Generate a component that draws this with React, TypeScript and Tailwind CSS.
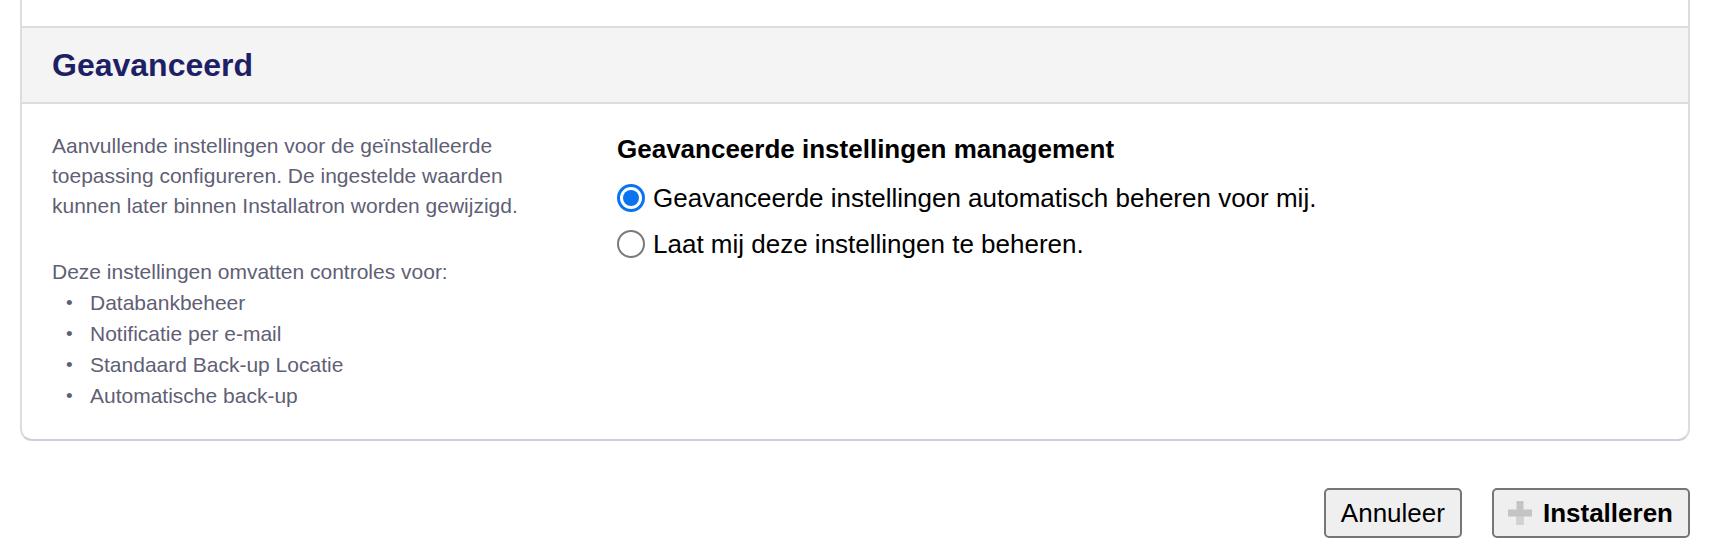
const features = [
  "Databankbeheer",
  "Notificatie per e-mail",
  "Standaard Back-up Locatie",
  "Automatische back-up",
];

function Radio({ checked }: { checked: boolean }) {
  if (checked) {
    return (
      <span className="flex h-[28px] w-[28px] shrink-0 items-center justify-center rounded-full border-[3px] border-[#0a74f0] bg-white">
        <span className="h-[16px] w-[16px] rounded-full bg-[#0a74f0]" />
      </span>
    );
  }
  return <span className="h-[28px] w-[28px] shrink-0 rounded-full border-2 border-[#7a7a7a] bg-white" />;
}

function PlusIcon() {
  return (
    <svg width="24" height="24" viewBox="0 0 24 24" className="shrink-0">
      <rect x="8.5" y="0" width="7" height="24" fill="#c4c4c4" />
      <rect x="0" y="8.5" width="24" height="7" fill="#c4c4c4" />
      <rect x="8.5" y="15.5" width="7" height="8.5" fill="#d2d2d2" />
    </svg>
  );
}

export default function App() {
  return (
    <div className="h-[560px] w-full overflow-hidden bg-white px-[20px] font-['Liberation_Sans',Arial,sans-serif]">
      {/* Panel */}
      <div className="rounded-b-[12px] border-x-2 border-b-2 border-x-[#dddddd] border-b-[#ccd0d8] bg-white">
        <div className="h-[26px]" />

        {/* Header */}
        <div className="flex h-[78px] items-center border-y-2 border-[#dddddd] bg-[#f4f4f4] pl-[30px]">
          <h2 className="text-[32px] font-bold leading-none text-[#1f1f66]">Geavanceerd</h2>
        </div>

        {/* Body */}
        <div className="flex items-start pb-[28px] pl-[30px]">
          <div className="w-[500px] shrink-0 pt-[27px] text-[21px] leading-[30px] text-[#5f5f75]">
            <p>
              Aanvullende instellingen voor de geïnstalleerde toepassing configureren. De ingestelde waarden kunnen
              later binnen Installatron worden gewijzigd.
            </p>
            <p className="mt-[36px]">Deze instellingen omvatten controles voor:</p>
            <ul>
              {features.map((f) => (
                <li key={f} className="flex items-center leading-[31px]">
                  <span className="w-[38px] pl-[14px] text-[19px]">•</span>
                  {f}
                </li>
              ))}
            </ul>
          </div>

          <div className="ml-[65px] pt-[30px] text-black">
            <h3 className="text-[26px] font-bold leading-[30px]">Geavanceerde instellingen management</h3>
            <div className="mt-[11px]">
              <label className="flex h-[46px] items-center gap-[8px] text-[26px]">
                <Radio checked />
                Geavanceerde instellingen automatisch beheren voor mij.
              </label>
              <label className="flex h-[46px] items-center gap-[8px] text-[26px]">
                <Radio checked={false} />
                Laat mij deze instellingen te beheren.
              </label>
            </div>
          </div>
        </div>
      </div>

      {/* Actions */}
      <div className="mt-[47px] flex justify-end gap-[30px]">
        <button className="flex h-[50px] items-center rounded-[5px] border-2 border-[#767676] bg-[#efefef] px-[15px] text-[26px] text-black">
          Annuleer
        </button>
        <button className="flex h-[50px] items-center gap-[11px] rounded-[5px] border-2 border-[#767676] bg-[#efefef] pl-[14px] pr-[15px] text-[26px] font-bold text-black">
          <PlusIcon />
          Installeren
        </button>
      </div>
    </div>
  );
}
